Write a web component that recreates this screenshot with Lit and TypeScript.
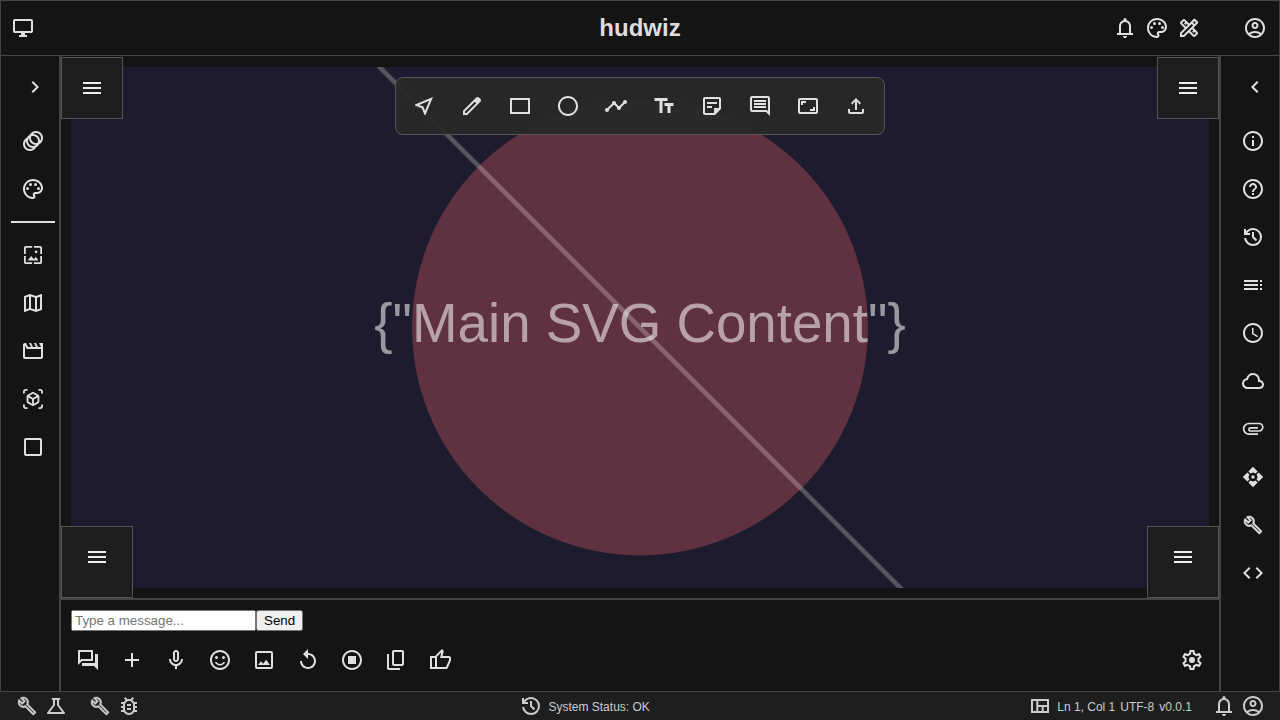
import { LitElement, html, css, svg } from "lit";
import { customElement } from "lit/decorators.js";

const P: Record<string, string> = {
  desktop: "M8 21v-2h2v-2H4q-.825 0-1.413-.588T2 15V5q0-.825.587-1.413T4 3h16q.825 0 1.413.587T22 5v10q0 .825-.587 1.413T20 17h-6v2h2v2H8Zm-4-6h16V5H4v10Z",
  right: "M10 6L8.59 7.41 13.17 12l-4.58 4.59L10 18l6-6z",
  left: "M15.41 7.41L14 6l-6 6 6 6 1.41-1.41L10.83 12z",
  menu: "M3 18h18v-2H3v2zm0-5h18v-2H3v2zm0-7v2h18V6H3z",
  animation: "M15 2c-2.71 0-5.05 1.54-6.22 3.78-1.28.67-2.34 1.72-3 3C3.54 9.95 2 12.29 2 15c0 3.87 3.13 7 7 7 2.71 0 5.05-1.54 6.22-3.78 1.28-.67 2.34-1.72 3-3C20.46 14.05 22 11.71 22 9c0-3.87-3.13-7-7-7zM9 20c-2.76 0-5-2.24-5-5 0-1.12.37-2.16 1-3 0 3.87 3.13 7 7 7-.84.63-1.88 1-3 1zm3-3c-2.76 0-5-2.24-5-5 0-1.12.37-2.16 1-3 0 3.86 3.13 6.99 7 7-.84.63-1.87 1-3 1zm4.7-3.3c-.53.19-1.1.3-1.7.3-2.76 0-5-2.24-5-5 0-.6.11-1.17.3-1.7.53-.19 1.1-.3 1.7-.3 2.76 0 5 2.24 5 5 0 .6-.11 1.17-.3 1.7zM19 12c0-3.86-3.13-6.99-7-7 .84-.63 1.87-1 3-1 2.76 0 5 2.24 5 5 0 1.12-.37 2.16-1 3z",
  palette: "M12 22C6.49 22 2 17.51 2 12S6.49 2 12 2s10 4.04 10 9c0 3.31-2.69 6-6 6h-1.77c-.28 0-.5.22-.5.5 0 .12.05.23.13.33.41.47.64 1.06.64 1.67 0 1.38-1.12 2.5-2.5 2.5zm0-18c-4.41 0-8 3.59-8 8s3.59 8 8 8c.28 0 .5-.22.5-.5 0-.16-.08-.28-.14-.35-.41-.46-.63-1.05-.63-1.65 0-1.38 1.12-2.5 2.5-2.5H16c2.21 0 4-1.79 4-4 0-3.86-3.59-7-8-7zM5 11.5a1.5 1.5 0 1 0 3 0a1.5 1.5 0 1 0-3 0zM8 7.5a1.5 1.5 0 1 0 3 0a1.5 1.5 0 1 0-3 0zM13 7.5a1.5 1.5 0 1 0 3 0a1.5 1.5 0 1 0-3 0zM16 11.5a1.5 1.5 0 1 0 3 0a1.5 1.5 0 1 0-3 0z",
  wallpaper: "M4 4h7V2H4c-1.1 0-2 .9-2 2v7h2V4zm6 9l-4 5h12l-3-4-2.03 2.71L10 13zm7-4.5c0-.83-.67-1.5-1.5-1.5S14 7.67 14 8.5s.67 1.5 1.5 1.5S17 9.33 17 8.5zM20 2h-7v2h7v7h2V4c0-1.1-.9-2-2-2zm0 18h-7v2h7c1.1 0 2-.9 2-2v-7h-2v7zM4 13H2v7c0 1.1.9 2 2 2h7v-2H4v-7z",
  map: "M20.5 3l-.16.03L15 5.1 9 3 3.36 4.9c-.21.07-.36.25-.36.48V20.5c0 .28.22.5.5.5l.16-.03L9 18.9l6 2.1 5.64-1.9c.21-.07.36-.25.36-.48V3.5c0-.28-.22-.5-.5-.5zM10 5.47l4 1.4v11.66l-4-1.4V5.47zm-5 .99l3-1.01v11.7l-3 1.16V6.46zm14 11.08l-3 1.01V6.86l3-1.16v11.84z",
  movie: "M4 6.47L5.76 10H20v8H4V6.47M22 4h-4l2 4h-3l-2-4h-2l2 4h-3l-2-4H8l2 4H7L5 4H4c-1.1 0-1.99.9-1.99 2L2 18c0 1.1.9 2 2 2h16c1.1 0 2-.9 2-2V4z",
  ar: "M3 4c0-.55.45-1 1-1h2V1H4C2.34 1 1 2.34 1 4v2h2V4zm0 16v-2H1v2c0 1.66 1.34 3 3 3h2v-2H4c-.55 0-1-.45-1-1zM20 1h-2v2h2c.55 0 1 .45 1 1v2h2V4c0-1.66-1.34-3-3-3zm1 19c0 .55-.45 1-1 1h-2v2h2c1.66 0 3-1.34 3-3v-2h-2v2zm-2-5.13V9.13c0-.72-.38-1.38-1-1.73l-5-2.88c-.31-.18-.65-.27-1-.27s-.69.09-1 .27L6 7.39c-.62.36-1 1.02-1 1.74v5.74c0 .72.38 1.38 1 1.73l5 2.88c.31.18.65.27 1 .27s.69-.09 1-.27l5-2.88c.62-.35 1-1.01 1-1.73zm-8 2.3l-4-2.3v-4.63l4 2.33v4.6zm1-6.33L8.04 8.53 12 6.25l3.96 2.28L12 10.84zm5 4.03l-4 2.3v-4.6l4-2.33v4.63z",
  square: "M19 5v14H5V5h14m0-2H5c-1.1 0-2 .9-2 2v14c0 1.1.9 2 2 2h14c1.1 0 2-.9 2-2V5c0-1.1-.9-2-2-2z",
  near: "M17.27 6.73l-4.24 10.13-1.32-3.42-.32-.83-.82-.32-3.43-1.33 10.13-4.23M21 3L3 10.53v.98l6.84 2.65L12.48 21h.98L21 3z",
  edit: "M5 19h1.425L16.2 9.225 14.775 7.8 5 17.575V19Zm-2 2v-4.25L16.2 3.575q.3-.275.663-.425.362-.15.762-.15t.775.15q.375.15.65.45L20.425 5q.3.275.438.65T21 6.4q0 .4-.138.763-.137.362-.437.662L7.25 21H3Z",
  rect: "M2 4v16h20V4H2zm18 14H4V6h16v12z",
  circle: "M12 2C6.47 2 2 6.47 2 12s4.47 10 10 10 10-4.47 10-10S17.53 2 12 2zm0 18c-4.41 0-8-3.59-8-8s3.59-8 8-8 8 3.59 8 8-3.59 8-8 8z",
  timeline: "M23 8c0 1.1-.9 2-2 2-.18 0-.35-.02-.51-.07l-3.56 3.55c.05.16.07.34.07.52 0 1.1-.9 2-2 2s-2-.9-2-2c0-.18.02-.36.07-.52l-2.55-2.55c-.16.05-.34.07-.52.07s-.36-.02-.52-.07l-4.55 4.56c.05.16.07.33.07.51 0 1.1-.9 2-2 2s-2-.9-2-2 .9-2 2-2c.18 0 .35.02.51.07l4.56-4.55C8.02 9.36 8 9.18 8 9c0-1.1.9-2 2-2s2 .9 2 2c0 .18-.02.36-.07.52l2.55 2.55c.16-.05.34-.07.52-.07s.36.02.52.07l3.55-3.56C19.02 8.35 19 8.18 19 8c0-1.1.9-2 2-2s2 .9 2 2z",
  text: "M2.5 4v3h5v12h3V7h5V4h-13zm19 5h-9v3h3v7h3v-7h3V9z",
  sticky: "M19 5v9h-5v5H5V5h14M19 3H5C3.9 3 3 3.9 3 5v14c0 1.1.9 2 2 2h10l6-6V5c0-1.1-.9-2-2-2zM12 14H7v-2h5v2zM17 10H7V8h10v2z",
  comment: "M21.99 4c0-1.1-.89-2-1.99-2H4c-1.1 0-2 .9-2 2v12c0 1.1.9 2 2 2h14l4 4-.01-18zM20 4v13.17L18.83 16H4V4h16zM6 12h12v2H6zm0-3h12v2H6zm0-3h12v2H6z",
  aspect: "M20 4H4c-1.1 0-2 .9-2 2v12c0 1.1.9 2 2 2h16c1.1 0 2-.9 2-2V6c0-1.1-.9-2-2-2zm0 14H4V6h16v12zM5 7h5v2H7v2H5zM19 17h-5v-2h3v-2h2z",
  upload: "M18 15v3H6v-3H4v3c0 1.1.9 2 2 2h12c1.1 0 2-.9 2-2v-3h-2zM7 9l1.41 1.41L11 7.83V16h2V7.83l2.59 2.58L17 9l-5-5-5 5z",
  bell: "M4 19v-2h2v-7q0-2.075 1.25-3.688T10.5 4.2v-.7q0-.625.438-1.063T12 2q.625 0 1.063.438T13.5 3.5v.7q2 .5 3.25 2.113T18 10v7h2v2H4ZM12 22q-.825 0-1.413-.588T10 20h4q0 .825-.588 1.413T12 22Zm-4-5h8v-7q0-1.65-1.175-2.825T12 6q-1.65 0-2.825 1.175T8 10v7Z",
  design: "M20.97 7.27c.39-.39.39-1.02 0-1.41l-2.83-2.83c-.39-.39-1.02-.39-1.41 0l-4.49 4.49-3.89-3.89c-.78-.78-2.05-.78-2.83 0l-1.9 1.9c-.78.78-.78 2.05 0 2.83l3.89 3.89L3 16.76V21h4.24l4.52-4.52 3.89 3.89c.95.95 2.23.6 2.83 0l1.9-1.9c.78-.78.78-2.05 0-2.83l-3.89-3.89 4.48-4.48zM5.04 6.94l1.89-1.9L8.2 6.31 7.02 7.5l1.41 1.41 1.19-1.19 1.2 1.2-1.9 1.9-3.88-3.88zm11.23 7.44l-1.19 1.19 1.41 1.41 1.19-1.19 1.27 1.27-1.9 1.9-3.89-3.89 1.9-1.9 1.21 1.21zM6.41 19H5v-1.41l9.61-9.61 1.3 1.3.11.11L6.41 19zm9.61-12.44l1.41-1.41 1.41 1.41-1.41 1.41-1.41-1.41z",
  account: "M12 2C6.48 2 2 6.48 2 12s4.48 10 10 10 10-4.48 10-10S17.52 2 12 2zM7.35 18.5C8.66 17.56 10.26 17 12 17s3.34.56 4.65 1.5c-1.31.94-2.91 1.5-4.65 1.5s-3.34-.56-4.65-1.5zm10.79-1.38C16.45 15.8 14.32 15 12 15s-4.45.8-6.14 2.12C4.7 15.73 4 13.95 4 12c0-4.42 3.58-8 8-8s8 3.58 8 8c0 1.95-.7 3.73-1.86 5.12zM12 6c-1.93 0-3.5 1.57-3.5 3.5S10.07 13 12 13s3.5-1.57 3.5-3.5S13.93 6 12 6zm0 5c-.83 0-1.5-.67-1.5-1.5S11.17 8 12 8s1.5.67 1.5 1.5S12.83 11 12 11z",
  info: "M11 7h2v2h-2zm0 4h2v6h-2zm1-9C6.48 2 2 6.48 2 12s4.48 10 10 10 10-4.48 10-10S17.52 2 12 2zm0 18c-4.41 0-8-3.59-8-8s3.59-8 8-8 8 3.59 8 8-3.59 8-8 8z",
  help: "M11 18h2v-2h-2v2zm1-16C6.48 2 2 6.48 2 12s4.48 10 10 10 10-4.48 10-10S17.52 2 12 2zm0 18c-4.41 0-8-3.59-8-8s3.59-8 8-8 8 3.59 8 8-3.59 8-8 8zm0-14c-2.21 0-4 1.79-4 4h2c0-1.1.9-2 2-2s2 .9 2 2c0 2-3 1.75-3 5h2c0-2.25 3-2.5 3-5 0-2.21-1.79-4-4-4z",
  history: "M12 21q-3.45 0-6.012-2.287T3.05 13H5.1q.35 2.6 2.313 4.3T12 19q2.925 0 4.963-2.037T19 12q0-2.925-2.037-4.962T12 5q-1.725 0-3.225.8T6.25 8H9v2H3V4h2v2.35q1.275-1.6 3.113-2.475T12 3q3.75 0 6.375 2.625T21 12q0 3.75-2.625 6.375T12 21Zm2.8-4.8L11 12.4V7h2v4.6l3.2 3.2-1.4 1.4Z",
  toc: "M3 9h14V7H3v2zm0 4h14v-2H3v2zm0 4h14v-2H3v2zm16 0h2v-2h-2v2zm0-10v2h2V7h-2zm0 6h2v-2h-2v2z",
  schedule: "M11.99 2C6.47 2 2 6.48 2 12s4.47 10 9.99 10C17.52 22 22 17.52 22 12S17.52 2 11.99 2zM12 20c-4.42 0-8-3.58-8-8s3.58-8 8-8 8 3.58 8 8-3.58 8-8 8zm.5-13H11v6l5.25 3.15.75-1.23-4.5-2.67z",
  cloud: "M6.5 20q-2.275 0-3.888-1.575T1 14.575q0-1.95 1.175-3.475T5.25 9.15q.625-2.3 2.5-3.725T12 4q2.925 0 4.963 2.038T19 11q1.725.2 2.863 1.488T23 15.5q0 1.875-1.313 3.188T18.5 20h-12Zm0-2h12q1.05 0 1.775-.725T21 15.5q0-1.05-.725-1.775T18.5 13H17v-2q0-2.075-1.463-3.538T12 6Q9.925 6 8.462 7.463T7 11h-.5q-1.45 0-2.475 1.025T3 14.5q0 1.45 1.025 2.475T6.5 18Z",
  attach: "M17 17.2H8a5.35 5.35 0 0 1 0-10.7H18a3.75 3.75 0 0 1 0 7.5H9.5a1.6 1.6 0 0 1 0-3.2H17",
  control: "M12 1.8l4.6 4.6-2 2-2.6-1-2.6 1-2-2zM22.2 12l-4.6 4.6-2-2 1-2.6-1-2.6 2-2zM12 22.2l-4.6-4.6 2-2 2.6 1 2.6-1 2 2zM1.8 12l4.6-4.6 2 2-1 2.6 1 2.6-2 2zM10.3 12a1.7 1.7 0 1 0 3.4 0a1.7 1.7 0 1 0-3.4 0z",
  build: "M22.61 18.99l-9.08-9.08c.93-2.34.45-5.1-1.44-7C9.79.61 6.21.4 3.66 2.25L7.5 6.1 6.08 7.51 2.25 3.69C.4 6.23.61 9.82 2.91 12.11c1.86 1.86 4.57 2.35 6.89 1.48l9.11 9.11c.39.39 1.02.39 1.41 0l2.3-2.3c.4-.38.4-1.01-.01-1.41zm-3 1.6l-9.46-9.46c-.61.45-1.29.72-2 .82-1.36.2-2.79-.21-3.83-1.25C3.37 9.76 2.93 8.5 3 7.26l3.09 3.09 4.24-4.24-3.09-3.09c1.24-.07 2.49.37 3.44 1.31 1.08 1.08 1.49 2.57 1.24 3.96-.12.71-.42 1.37-.88 1.96l9.45 9.45-.88.88z",
  code: "M9.4 16.6L4.8 12l4.6-4.6L8 6l-6 6 6 6 1.4-1.4zm5.2 0l4.6-4.6-4.6-4.6L16 6l6 6-6 6-1.4-1.4z",
  forum: "M15 4v7H5.17L4 12.17V4h11m1-2H3c-.55 0-1 .45-1 1v14l4-4h10c.55 0 1-.45 1-1V3c0-.55-.45-1-1-1zm5 4h-2v9H6v2c0 .55.45 1 1 1h11l4 4V7c0-.55-.45-1-1-1z",
  add: "M19 13h-6v6h-2v-6H5v-2h6V5h2v6h6v2z",
  mic: "M12 14c1.66 0 3-1.34 3-3V5c0-1.66-1.34-3-3-3S9 3.34 9 5v6c0 1.66 1.34 3 3 3zm-1-9c0-.55.45-1 1-1s1 .45 1 1v6c0 .55-.45 1-1 1s-1-.45-1-1V5zm6 6c0 2.76-2.24 5-5 5s-5-2.24-5-5H5c0 3.53 2.61 6.43 6 6.92V21h2v-3.08c3.39-.49 6-3.39 6-6.92h-2z",
  smile: "M14 9.5a1.5 1.5 0 1 0 3 0a1.5 1.5 0 1 0-3 0zM7 9.5a1.5 1.5 0 1 0 3 0a1.5 1.5 0 1 0-3 0zM12 16c-1.48 0-2.75-.81-3.45-2H6.88c.8 2.05 2.79 3.5 5.12 3.5s4.32-1.45 5.12-3.5h-1.67c-.7 1.19-1.97 2-3.45 2zm-.01-14C6.47 2 2 6.48 2 12s4.47 10 9.99 10C17.52 22 22 17.52 22 12S17.52 2 11.99 2zM12 20c-4.42 0-8-3.58-8-8s3.58-8 8-8 8 3.58 8 8-3.58 8-8 8z",
  image: "M19 5v14H5V5h14m0-2H5c-1.1 0-2 .9-2 2v14c0 1.1.9 2 2 2h14c1.1 0 2-.9 2-2V5c0-1.1-.9-2-2-2zm-4.86 8.86l-3 3.87L9 13.14 6 17h12l-3.86-5.14z",
  replay: "M12 5V1L7 6l5 5V7c3.31 0 6 2.69 6 6s-2.69 6-6 6-6-2.69-6-6H4c0 4.42 3.58 8 8 8s8-3.58 8-8-3.58-8-8-8z",
  stop: "M12 2C6.48 2 2 6.48 2 12s4.48 10 10 10 10-4.48 10-10S17.52 2 12 2zm0 18c-4.42 0-8-3.58-8-8s3.58-8 8-8 8 3.58 8 8-3.58 8-8 8zM16 16H8V8h8v8z",
  copy: "M18 2H10c-1.1 0-2 .9-2 2v12c0 1.1.9 2 2 2h8c1.1 0 2-.9 2-2V4c0-1.1-.9-2-2-2zm0 14h-8V4h8v12zM5 6H3v14c0 1.1.9 2 2 2h11v-2H5V6z",
  thumb: "M18 21H7V8l7-7 1.25 1.25q.175.175.288.475t.112.575v.35L14.55 8H21q.8 0 1.4.6T23 10v2q0 .175-.05.375t-.1.375l-3 7.05q-.225.5-.75.85T18 21Zm-9-2h9l3-7v-2h-9l1.35-5.5L9 8.85V19ZM7 8v2H4v9h3v2H2V8h5Z",
  gear: "M19.43 12.98c.04-.32.07-.64.07-.98 0-.34-.03-.66-.07-.98l2.11-1.65c.19-.15.24-.42.12-.64l-2-3.46c-.09-.16-.26-.25-.44-.25-.06 0-.12.01-.17.03l-2.49 1c-.52-.4-1.08-.73-1.69-.98l-.38-2.65C14.46 2.18 14.25 2 14 2h-4c-.25 0-.46.18-.49.42l-.38 2.65c-.61.25-1.17.59-1.69.98l-2.49-1c-.06-.02-.12-.03-.18-.03-.17 0-.34.09-.43.25l-2 3.46c-.13.22-.07.49.12.64l2.11 1.65c-.04.32-.07.65-.07.98 0 .33.03.66.07.98l-2.11 1.65c-.19.15-.24.42-.12.64l2 3.46c.09.16.26.25.44.25.06 0 .12-.01.17-.03l2.49-1c.52.4 1.08.73 1.69.98l.38 2.65c.03.24.24.42.49.42h4c.25 0 .46-.18.49-.42l.38-2.65c.61-.25 1.17-.59 1.69-.98l2.49 1c.06.02.12.03.18.03.17 0 .34-.09.43-.25l2-3.46c.12-.22.07-.49-.12-.64l-2.11-1.65zm-1.98-1.71c.04.31.05.52.05.73 0 .21-.02.43-.05.73l-.14 1.13.89.7 1.08.84-.7 1.21-1.27-.51-1.04-.42-.9.68c-.43.32-.84.56-1.25.73l-1.06.43-.16 1.13-.2 1.35h-1.4l-.19-1.35-.16-1.13-1.06-.43c-.43-.18-.83-.41-1.23-.71l-.91-.7-1.06.43-1.27.51-.7-1.21 1.08-.84.89-.7-.14-1.13c-.03-.31-.05-.54-.05-.74s.02-.43.05-.73l.14-1.13-.89-.7-1.08-.84.7-1.21 1.27.51 1.04.42.9-.68c.43-.32.84-.56 1.25-.73l1.06-.43.16-1.13.2-1.35h1.39l.19 1.35.16 1.13 1.06.43c.43.18.83.41 1.23.71l.91.7 1.06-.43 1.27-.51.7 1.21-1.07.85-.89.7.14 1.13zM9 12a3 3 0 1 0 6 0a3 3 0 1 0-6 0z",
  science: "M13 11.33L18 18H6l5-6.67V6h2m2.96-2H8.04c-.42 0-.65.48-.39.81L9 6.5v4.17L3.2 18.4c-.49.66-.02 1.6.8 1.6h16c.82 0 1.29-.94.8-1.6L15 10.67V6.5l1.35-1.69c.26-.33.03-.81-.39-.81z",
  bug: "M20 8h-2.81c-.45-.78-1.07-1.45-1.82-1.96L17 4.41 15.59 3l-2.17 2.17C12.96 5.06 12.49 5 12 5s-.96.06-1.41.17L8.41 3 7 4.41l1.62 1.63C7.88 6.55 7.26 7.22 6.81 8H4v2h2.09c-.05.33-.09.66-.09 1v1H4v2h2v1c0 .34.04.67.09 1H4v2h2.81c1.04 1.79 2.97 3 5.19 3s4.15-1.21 5.19-3H20v-2h-2.09c.05-.33.09-.66.09-1v-1h2v-2h-2v-1c0-.34-.04-.67-.09-1H20V8zm-4 4v3c0 .22-.03.47-.07.7l-.1.65-.37.65c-.72 1.24-2.04 2-3.46 2s-2.74-.77-3.46-2l-.37-.64-.1-.65C8.03 15.48 8 15.23 8 15v-4c0-.23.03-.48.07-.7l.1-.65.37-.65c.3-.52.72-.97 1.21-1.31l.57-.39.74-.18c.31-.08.63-.12.94-.12.32 0 .63.04.95.12l.68.16.61.42c.5.34.91.78 1.21 1.31l.38.65.1.65c.04.22.07.47.07.69v1zm-6 2h4v2h-4zm0-4h4v2h-4z",
  quilt: "M3 5v14h18V5H3zm5.33 12H5V7h3.33v10zm5.34 0h-3.34v-4h3.34v4zM19 17h-3.33v-4H19v4zm0-6h-8.67V7H19v4z",
};

const BOX: Record<string, string> = {
  build: "-2.6 -2.6 29.2 29.2",
  wallpaper: "-1.3 -1.3 26.6 26.6",
  ar: "-1.2 -1.2 26.4 26.4",
};

const ic = (n: string) => {
  const cls = n === "build" ? "thick" : n === "attach" ? "line" : "";
  return html`<svg class="ic ${cls}" viewBox=${BOX[n] ?? "0 0 24 24"} aria-hidden="true">${svg`<path d=${P[n]}></path>`}</svg>`;
};
const btn = (n: string, c = "") => html`<span class="btn ${c}">${ic(n)}</span>`;

@customElement("app-root")
export class AppRoot extends LitElement {
  static styles = css`
    :host { display: block; width: 1280px; height: 720px; font-family: "Liberation Sans", Arial, sans-serif; color: #e0e0e0; background: #141414; overflow: hidden; }
    * { box-sizing: border-box; }
    .app { display: grid; grid-template-rows: 56px 635px 29px; grid-template-columns: 60px 1160px 60px; width: 1280px; height: 720px; }
    .ic { width: 24px; height: 24px; display: block; fill: currentColor; flex: none; }
    .ic.thick path { stroke: currentColor; stroke-width: .55px; }
    .ic.line path { fill: none; stroke: currentColor; stroke-width: 1.7px; }
    .btn { display: flex; align-items: center; justify-content: center; width: 48px; height: 48px; flex: none; }
    header { grid-column: 1 / 4; display: grid; grid-template-columns: 1fr auto 1fr; align-items: center; border: 1px solid #444; background: #141414; padding: 0 12px; }
    .hl { margin-left: -2px; }
    h1 { margin: 0; font-size: 24px; font-weight: 700; color: #ddd; line-height: 28px; }
    .hr { display: flex; justify-content: flex-end; align-items: center; gap: 8px; }
    .acct { margin-left: 34px; }
    .side { border-left: 1px solid #444; border-right: 1px solid #444; background: #141414; padding: 7px 0 0 8px; display: flex; flex-direction: column; }
    .chev { margin-bottom: 6px; }
    .chev.l { transform: translateX(2px); }
    .chev.r { transform: translateX(2px); }
    .div { width: 44px; height: 2px; background: #ddd; margin: 8px 0 8px 2px; }
    main { display: flex; flex-direction: column; border-left: 1px solid #444; border-right: 1px solid #444; padding-top: 1px; min-width: 0; }
    .stage { position: relative; padding: 10px; border-bottom: 1px solid #444; height: 542px; background: #141414; }
    .stage > svg { display: block; width: 1138px; height: 521px; background: #1c1c2e; }
    .panel { position: absolute; display: flex; justify-content: center; align-items: center; background: rgba(30,30,30,.96); border: 1px solid #555; color: #eee; }
    .s62 { width: 62px; height: 62px; top: 0; }
    .s72 { width: 72px; height: 72px; bottom: 0; align-items: flex-start; padding-top: 18px; }
    .pl { left: 0; } .pr { right: 0; }
    .tools { position: absolute; top: 20px; left: 334px; display: flex; padding: 4px; background: rgba(40,40,40,.95); border: 1px solid #555; border-radius: 8px; }
    .chat { height: 92px; border-top: 1px solid #444; background: #141414; padding: 10px 5px 0 10px; }
    .inrow { display: flex; align-items: center; height: 21px; }
    input, button { font-family: "Liberation Sans", Arial, sans-serif; font-size: 13.3333px; }
    input { width: 185px; height: 21px; margin: 0; }
    button { height: 21px; margin: 0; padding: 1px 6px; }
    .acts { display: flex; align-items: center; justify-content: space-between; margin: 7px 0 0 -5px; height: 44px; }
    .group { display: flex; }
    .b44 { width: 44px; height: 44px; }
    footer { grid-column: 1 / 4; display: flex; justify-content: space-between; align-items: center; background: #1e1e1e; border-top: 1px solid #444; padding: 0 15px; font-size: 12px; color: #ccc; }
    .f { display: flex; align-items: center; gap: 5px; }
    .f span.t { padding-top: 2px; }
    .sp { margin-left: 10px; }
  `;

  render() {
    const leftA = ["animation", "palette"];
    const leftB = ["wallpaper", "map", "movie", "ar", "square"];
    const right = ["info", "help", "history", "toc", "schedule", "cloud", "attach", "control", "build", "code"];
    const tools = ["near", "edit", "rect", "circle", "timeline", "text", "sticky", "comment", "aspect", "upload"];
    const acts = ["forum", "add", "mic", "smile", "image", "replay", "stop", "copy", "thumb"];
    return html`<div class="app">
      <header>
        <div class="hl">${ic("desktop")}</div>
        <h1>hudwiz</h1>
        <div class="hr">${ic("bell")}${ic("palette")}${ic("design")}<span class="acct">${ic("account")}</span></div>
      </header>
      <aside class="side">
        ${btn("right", "chev l")}
        ${leftA.map((n) => btn(n))}
        <div class="div"></div>
        ${leftB.map((n) => btn(n))}
      </aside>
      <main>
        <div class="stage">
          <svg viewBox="0 0 800 800">
            <circle cx="400" cy="400" r="350" fill="rgb(255,99,99)" fill-opacity=".3"></circle>
            <line x1="-20" y1="-20" x2="820" y2="820" stroke="#fff" stroke-opacity=".25" stroke-width="7"></line>
            <text x="400" y="400" text-anchor="middle" dominant-baseline="middle" font-size="84" fill="#fff" fill-opacity=".55" font-family="Liberation Sans, Arial, sans-serif">{"Main SVG Content"}</text>
          </svg>
          <div class="panel s62 pl">${ic("menu")}</div>
          <div class="panel s62 pr">${ic("menu")}</div>
          <div class="panel s72 pl">${ic("menu")}</div>
          <div class="panel s72 pr">${ic("menu")}</div>
          <div class="tools">${tools.map((n) => btn(n))}</div>
        </div>
        <div class="chat">
          <div class="inrow"><input placeholder="Type a message..." /><button>Send</button></div>
          <div class="acts">
            <div class="group">${acts.map((n) => btn(n, "b44"))}</div>
            ${btn("gear", "b44")}
          </div>
        </div>
      </main>
      <aside class="side">
        ${btn("left", "chev r")}
        ${right.map((n) => btn(n))}
      </aside>
      <footer>
        <div class="f">${ic("build")}${ic("science")}<span class="sp"></span>${ic("build")}${ic("bug")}</div>
        <div class="f">${ic("history")}<span class="t">System Status: OK</span></div>
        <div class="f">${ic("quilt")}<span class="t">Ln 1, Col 1</span><span class="t">UTF-8</span><span class="t">v0.0.1</span><span class="sp"></span>${ic("bell")}${ic("account")}</div>
      </footer>
    </div>`;
  }
}
